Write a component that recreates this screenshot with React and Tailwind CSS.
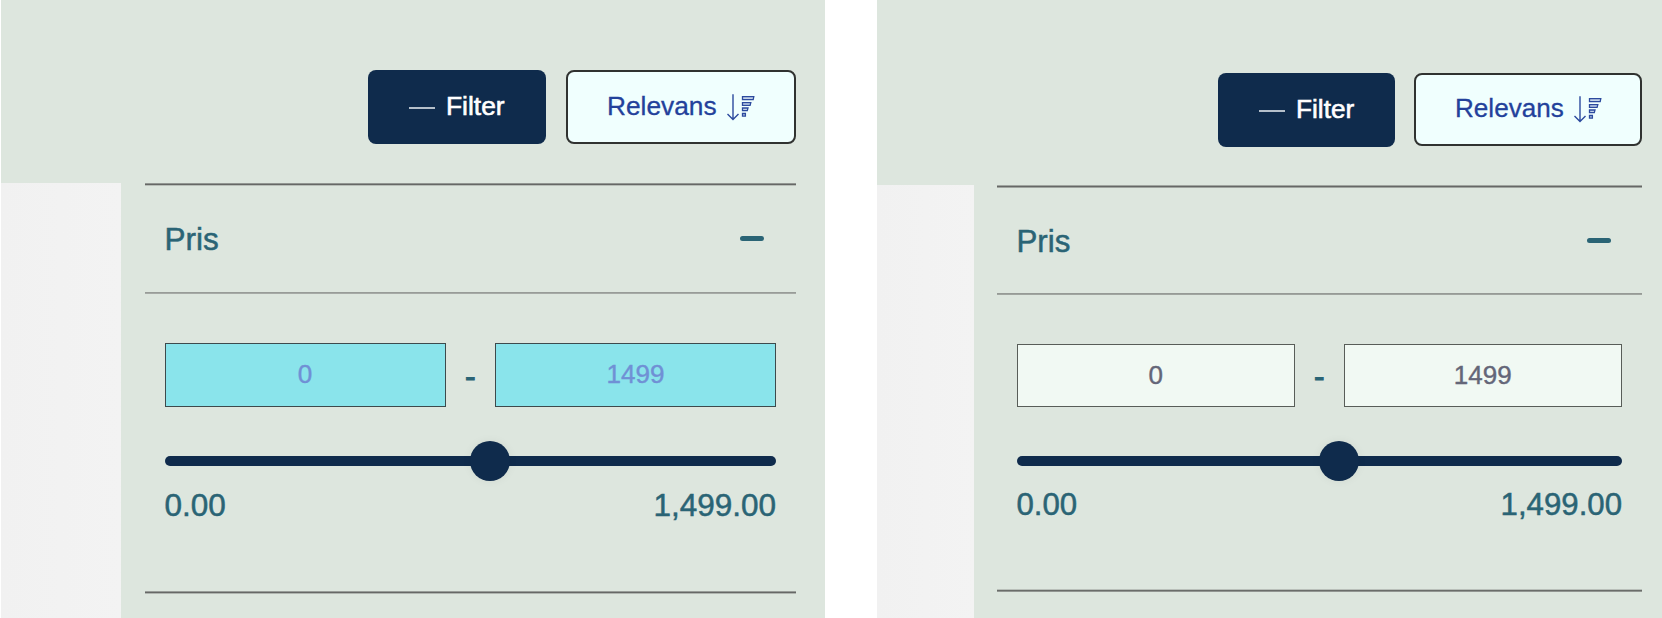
import React from "react";

const left = {
  panel: "w-[824px]",
  header: "h-[183px] pt-[70px] pr-[29.5px] gap-[20px]",
  filter: "w-[178px] h-[74px] pl-[41px] text-[26.4px]",
  sort: "w-[229.5px] h-[74px] pl-[39px] text-[26.3px]",
  photo: "w-[120px]",
  section: "ml-[24px] w-[650.5px]",
  top: "h-[3px] border-y border-t-[#929692] bg-[#666866] border-b-[#b9bfb9]",
  title: "h-[106px] pl-[19.5px] pr-[31.5px] text-[31.5px]",
  titleText: "mt-[2px]",
  minus: "mt-[-1px]",
  mid: "h-[3px] border-y border-t-[#989c98] bg-[#a6aaa6] border-b-[#dde6de]",
  body: "h-[296px] px-[19.5px] pt-[48px]",
  input: "w-[281px] h-[64px] bg-[#8ae4eb] text-[#7090d5] text-[26.1px] border-[#3d4a4c]",
  dash: "mt-[1px] text-[32px]",
  track: "mt-[49px] w-[611.5px]",
  thumb: "left-[305.5px]",
  labels: "mt-[21px] text-[31.5px]",
  bottom: "h-[3px] border-y border-t-[#999d99] bg-[#666866] border-b-[#b0b5b0]",
};

const right = {
  panel: "w-[785px]",
  header: "h-[185px] pt-[73px] pr-[20.5px] gap-[19px]",
  filter: "w-[177px] h-[74px] pl-[41px] text-[26.2px]",
  sort: "w-[227.5px] h-[73px] pl-[39px] text-[26.1px]",
  photo: "w-[97px]",
  section: "ml-[23px] w-[644.5px]",
  top: "h-[3px] border-y border-t-[#a0a5a0] bg-[#666866] border-b-[#a0a5a0]",
  title: "h-[105px] pl-[19.5px] pr-[31px] text-[31.3px]",
  titleText: "mt-[3px]",
  minus: "",
  mid: "h-[2px] border-b border-b-[#a0a5a0] bg-[#969a96]",
  body: "h-[294px] px-[19.5px] pt-[49px]",
  input: "w-[278.5px] h-[63px] bg-[#f1f9f3] text-[#646678] text-[26px] border-[#585d58] pb-px",
  dash: "mt-[2px] text-[31.7px]",
  track: "mt-[49px] w-[605.5px]",
  thumb: "left-[302.5px]",
  labels: "mt-[21px] text-[31.2px]",
  bottom: "h-[3px] border-y border-t-[#b9bfb9] bg-[#6a6d6a] border-b-[#929692]",
};

function SortIcon() {
  return (
    <svg width="28" height="28" viewBox="0 0 28 28" fill="none" stroke="#2c4a9e" strokeWidth="1.4">
      <path d="M6 0.3V26M0.5 20L6 25.6L11.5 20" />
      <path
        fill="#c3d3e8"
        strokeWidth="1.3"
        d="M15.5 2.7H26.8L26.2 5.7H15.5ZM15.5 8.6H23.8L23.1 11.3H15.5ZM15.5 14H21L20.3 16.6H15.5ZM15.5 19.5H18.4V22.2H15.5Z"
      />
    </svg>
  );
}

function PriceFilter({ s }) {
  return (
    <div className={`${s.panel} h-full flex flex-col shrink-0 bg-[#dde6de] overflow-hidden`}>
      <div className={`${s.header} flex items-start justify-end shrink-0`}>
        <button className={`${s.filter} flex items-center rounded-[8px] bg-[#0f2b4c] text-white`}>
          <span className="w-[26px] h-[2px] mt-[2px] mr-[11px] bg-[#b5bfca]" />
          <span className="mt-[-1px] [-webkit-text-stroke:0.6px_white]">Filter</span>
        </button>
        <button className={`${s.sort} flex items-center rounded-[8px] border-2 border-[#303230] bg-[#f0fffe] text-[#23419b]`}>
          <span className="mt-[-1px] mr-[10px] [-webkit-text-stroke:0.3px_#23419b]">Relevans</span>
          <span className="mt-[1px]">
            <SortIcon />
          </span>
        </button>
      </div>
      <div className="flex grow min-h-0">
        <div className={`${s.photo} shrink-0 bg-linear-to-r from-[#f1f1f1] to-[#f3f3f3]`} />
        <div className={`${s.section} shrink-0 text-[#2a6475]`}>
          <div className={s.top} />
          <div className={`${s.title} flex items-center justify-between`}>
            <span className={`${s.titleText} [-webkit-text-stroke:0.5px_#2a6475]`}>Pris</span>
            <span className={`${s.minus} w-[24px] h-[5px] rounded-full bg-[#2a6475]`} />
          </div>
          <div className={s.mid} />
          <div className={s.body}>
            <div className="flex items-center justify-between">
              <div className={`${s.input} flex items-center justify-center border [-webkit-text-stroke:0.4px_currentColor]`}>0</div>
              <span className={`${s.dash} leading-none [-webkit-text-stroke:1px_#2a6475]`}>-</span>
              <div className={`${s.input} flex items-center justify-center border [-webkit-text-stroke:0.4px_currentColor]`}>1499</div>
            </div>
            <div className={`${s.track} relative h-[10px] rounded-full bg-[#0f2b4c]`}>
              <div className={`${s.thumb} absolute -top-[15px] size-[40px] rounded-full bg-[#0f2b4c] shadow-[0_0_10px_rgba(0,0,0,0.06)]`} />
            </div>
            <div className={`${s.labels} flex justify-between leading-[36px] [-webkit-text-stroke:0.5px_#2a6475]`}>
              <span>0.00</span>
              <span>1,499.00</span>
            </div>
          </div>
          <div className={s.bottom} />
        </div>
      </div>
    </div>
  );
}

export default function App() {
  return (
    <div className="w-[1662px] h-[618px] flex overflow-hidden bg-white pl-px gap-[52px] font-['Liberation_Sans',Arial,sans-serif]">
      <PriceFilter s={left} />
      <PriceFilter s={right} />
    </div>
  );
}
